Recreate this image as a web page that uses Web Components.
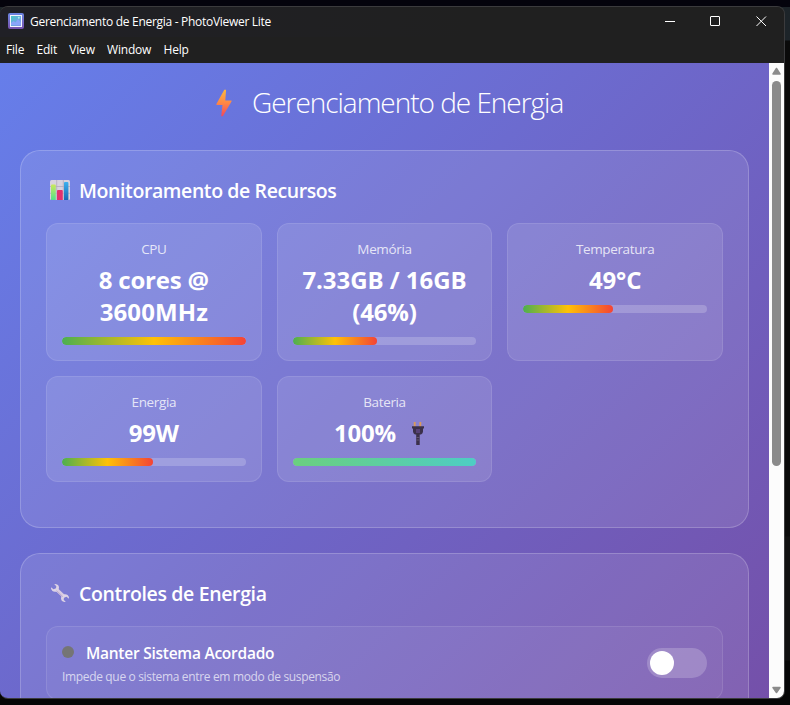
<!DOCTYPE html>
<html lang="pt-BR">
<head>
<meta charset="utf-8">
<title>Gerenciamento de Energia</title>
<style>
html,body{margin:0;height:705px;overflow:hidden;background:#070709}
body{font-family:"Open Sans","Noto Sans",sans-serif;color:#fff;background:linear-gradient(#04030c 0 7px,#1d2429 7px 40px,#0a0a0a 41px 536px,#101010 537px 660px,#060606 661px)}
</style>
</head>
<body>
<app-window>
  <window-titlebar slot="bar">Gerenciamento de Energia - PhotoViewer Lite</window-titlebar>
  <menu-bar slot="bar" items="File,Edit,View,Window,Help"></menu-bar>
  <page-title><energy-icon name="bolt" slot="icon"></energy-icon>Gerenciamento de Energia</page-title>
  <glass-section>
    <energy-icon name="chart" slot="icon"></energy-icon>
    <span slot="title">Monitoramento de Recursos</span>
    <resource-grid>
      <resource-card label="CPU" level="100">8 cores @<br><span style="letter-spacing:.1px">3600MHz</span></resource-card>
      <resource-card label="Memória" level="46"><span style="letter-spacing:-.05px">7.33GB / 16GB</span><br>(46%)</resource-card>
      <resource-card label="Temperatura" level="49">49°C</resource-card>
      <resource-card label="Energia" level="49.7">99W</resource-card>
      <resource-card label="Bateria" level="100" kind="battery">100% <energy-icon name="plug"></energy-icon></resource-card>
    </resource-grid>
  </glass-section>
  <glass-section style="--title-ls:-.36px">
    <energy-icon name="wrench" slot="icon"></energy-icon>
    <span slot="title">Controles de Energia</span>
    <toggle-row><span slot="name">Manter Sistema Acordado</span>Impede que o sistema entre em modo de suspensão</toggle-row>
  </glass-section>
</app-window>
<script>
const define=(name,html,init)=>customElements.define(name,class extends HTMLElement{
  connectedCallback(){
    if(this.shadowRoot)return;
    const root=this.attachShadow({mode:'open'});
    root.innerHTML=html;
    if(init)init(this,root);
  }
});

define('app-window',`<style>
:host{display:flex;flex-direction:column;box-sizing:border-box;width:785px;height:693px;position:relative;top:6px;border:1px solid #3b3b3d;border-left:0;border-radius:8px;overflow:hidden;background:#202020}
.body{flex:1;min-height:0;display:flex}
.view{flex:1;min-width:0;overflow:hidden;background:linear-gradient(135deg,#667eea 0%,#764ba2 100%) 0 0/100% 790px no-repeat}
.content{display:flex;flex-direction:column;gap:25px;padding:0 20px}
</style>
<slot name="bar"></slot>
<div class="body"><div class="view"><div class="content"><slot></slot></div></div><scroll-track></scroll-track></div>`);

define('window-titlebar',`<style>
:host{display:flex;align-items:center;height:30px;flex:none;background:linear-gradient(90deg,#202026,#202020 60%);font-size:12px;letter-spacing:-.29px;padding-left:8px}
.logo{width:16px;height:16px;margin-right:6px;position:relative;top:-1px}
.name{flex:1;line-height:16px}
.buttons{display:flex;width:137px}
.buttons svg{width:46px;height:29px;display:block;flex:none;position:relative;top:-1px}
</style>
<svg class="logo" viewBox="0 0 16 16"><defs><linearGradient id="f" x2="0" y2="1"><stop stop-color="#6c86e2"/><stop offset="1" stop-color="#7752ad"/></linearGradient><linearGradient id="p" x2="1" y2="1"><stop stop-color="#46cbc4"/><stop offset="1" stop-color="#8a8df4"/></linearGradient></defs><rect width="16" height="16" rx="2" fill="url(#f)"/><rect x="2.5" y="2.5" width="11" height="11" fill="url(#p)" stroke="#f4f4ff"/><path d="M3 12V10l2.5-2 2 1.5L10 6l3 3.5V12z" fill="#8aa5fa"/><circle cx="10.8" cy="4.8" r="1" fill="#a7eee9"/></svg>
<span class="name"><slot></slot></span>
<span class="buttons">
<svg viewBox="0 0 46 29"><path d="M18 14.5h10" stroke="#fff"/></svg>
<svg viewBox="0 0 46 29"><rect x="17.5" y="9.500" width="9" height="9" rx=".5" fill="none" stroke="#fff"/></svg>
<svg viewBox="0 0 46 29"><path d="M17.500 9.500l9.500 9.500M27 9.500l-9.500 9.500" stroke="#fff"/></svg>
</span>`);

define('menu-bar',`<style>
:host{display:flex;height:26px;flex:none;background:#202020;font-size:12px;letter-spacing:-.2px;padding-left:6px;gap:12.3px;line-height:25px}
</style>`,(el,root)=>{
  for(const t of el.getAttribute('items').split(',')){
    const s=document.createElement('span');s.textContent=t;root.append(s);
  }
});

define('scroll-track',`<style>
:host{display:flex;flex-direction:column;align-items:center;width:15px;background:#fcfcfc}
svg{width:15px;height:18px;flex:none;display:block}
.thumb{width:9px;height:385px;border-radius:5px;background:#8b8b8b}
.rest{flex:1}
</style>
<svg viewBox="0 0 15 18"><path d="M7.500 5.500L11 11H4z" fill="#8b8b8b" stroke="#8b8b8b" stroke-width="1.500" stroke-linejoin="round"/></svg>
<div class="thumb"></div><div class="rest"></div>
<svg viewBox="0 0 15 18"><path d="M7.500 12.500L11 7.500H4z" fill="#8b8b8b" stroke="#8b8b8b" stroke-width="1.500" stroke-linejoin="round"/></svg>`);

define('page-title',`<style>
:host{display:flex;height:62px;font-size:28px;font-weight:300;letter-spacing:-1.03px;padding-left:195px;line-height:79px;white-space:nowrap}
.gap{width:20px}
::slotted(energy-icon){margin-top:24px}
</style><slot name="icon"></slot><span class="gap"></span><span><slot></slot></span>`);

define('glass-section',`<style>
:host{display:block;flex:none;box-sizing:border-box;padding:25px;border:1px solid rgba(255,255,255,.2);border-radius:20px;background:rgba(255,255,255,.1)}
h2{display:flex;align-items:center;margin:0 0 19px;height:28px;font-size:19.500px;font-weight:650;letter-spacing:var(--title-ls,-.4px);line-height:28px;white-space:nowrap}
.icon{width:33px;height:28px;display:block}
.text{padding-top:2px}
</style><h2><span class="icon"><slot name="icon"></slot></span><span class="text"><slot name="title"></slot></span></h2><slot></slot>`);

define('resource-grid',`<style>
:host{display:grid;grid-template-columns:repeat(3,1fr);gap:15px;margin-bottom:20px}
</style><slot></slot>`);

define('resource-card',`<style>
:host{display:block;box-sizing:border-box;padding:15px;border:1px solid rgba(255,255,255,.1);border-radius:12px;background:rgba(255,255,255,.1);text-align:center}
.label{height:25px;line-height:20px;font-size:13.500px;letter-spacing:-.36px;color:rgba(255,255,255,.8)}
.value{font-size:24px;font-weight:700;line-height:32px;letter-spacing:-.2px;white-space:nowrap}
.bar{height:8px;margin-top:9px;border-radius:4px;background:rgba(255,255,255,.2);overflow:hidden}
.fill{height:100%;border-radius:4px;background:linear-gradient(90deg,#4caf50,#ffc107,#f44336)}
:host([kind=battery]) .fill{background:linear-gradient(90deg,#6bcf7f,#4ecdc4)}
</style><div class="label"></div><div class="value"><slot></slot></div><div class="bar"><div class="fill"></div></div>`,(el,root)=>{
  root.querySelector('.label').textContent=el.getAttribute('label');
  root.querySelector('.fill').style.width=el.getAttribute('level')+'%';
});

define('toggle-row',`<style>
:host{display:flex;align-items:center;justify-content:space-between;box-sizing:border-box;height:74px;padding:0 15px;border:1px solid rgba(255,255,255,.1);border-radius:12px;background:rgba(255,255,255,.05)}
.name{display:flex;align-items:center;height:24px;font-size:15.500px;font-weight:650;letter-spacing:-.25px;white-space:nowrap}
.text{padding-top:2px}
.dot{width:12px;height:12px;border-radius:50%;background:#757575;margin-right:12px}
.desc{font-size:12px;letter-spacing:-.34px;line-height:20px;padding-top:3px;margin-bottom:-1px;color:rgba(255,255,255,.7);white-space:nowrap}
.switch{box-sizing:border-box;width:60px;height:30px;padding:3px;border-radius:15px;background:rgba(255,255,255,.2)}
.knob{width:24px;height:24px;border-radius:50%;background:#fff}
</style><div><div class="name"><span class="dot"></span><span class="text"><slot name="name"></slot></span></div><div class="desc"><slot></slot></div></div><div class="switch"><div class="knob"></div></div>`);

const icons={
bolt:[16,28,`<defs><linearGradient id="g" x2="0" y2="1"><stop stop-color="#fdb83e"/><stop offset=".5" stop-color="#ff8745"/><stop offset="1" stop-color="#f1485c"/></linearGradient></defs><path d="M8.300 .7h1.800L9.300 11.500h5.800q.9.200.4 1L6.800 27.300H5.200L6.500 16H1Q0 15.800.4 15z" fill="url(#g)"/>`],
chart:[20,20,`<defs><linearGradient id="a" x2="0" y2="1"><stop stop-color="#cbe85b"/><stop offset="1" stop-color="#52df8c"/></linearGradient><linearGradient id="b" x2="0" y2="1"><stop stop-color="#3db0ee"/><stop offset="1" stop-color="#1a68b4"/></linearGradient></defs><rect width="20" height="20" rx="1.500" fill="#d8d2de"/><path d="M0 6.500h20M0 13.300h20M6.700 0v20M13.300 0v20" stroke="#b2aabd" stroke-width=".8"/><path d="M1 5.500q0-1 1-1h2.800q1 0 1 1V20H1z" fill="url(#a)"/><path d="M7 11q0-1 1-1h3.800q1 0 1 1v9H7z" fill="#e3306d"/><path d="M14 3q0-1 1-1h2.400q1 0 1 1v17H14z" fill="url(#b)"/>`],
wrench:[20,20,`<path d="M6 6L14.500 14" stroke="#d8cbe2" stroke-width="3.400"/><path d="M4.200 1.100Q7 .5 8.600 2.800Q9.400 4.500 8.600 6.400L6.600 8.500Q4.200 9.300 2.400 8Q.6 6.500 1 4.200L3.600 6.200L6 5.200L6.300 3.200z" fill="#ddd3e5"/><path d="M15.800 18.900Q13 19.500 11.400 17.200Q10.600 15.500 11.400 13.600L13.400 11.500Q15.800 10.700 17.600 12Q19.400 13.500 19 15.800L16.400 13.800L14 14.800L13.700 16.800z" fill="#ddd3e5"/><path d="M6.500 7.500l6.500 6.300" stroke="#b9a5cb" stroke-width=".8"/>`],
plug:[14,26,`<path d="M3.700 1v5M9.300 1v5" stroke="#d99a5b" stroke-width="1.900"/><path d="M1 5.200h12v2.200h-1v3.100q0 2-2 3H8.700V24H5.200V13.500H4q-2-1-2-3V7.400H1z" fill="#3b304a"/><path d="M5 9h4M5 11h4" stroke="#7957ad" stroke-width=".9"/><path d="M5.500 16.500h3M5.500 19h3" stroke="#6b607b" stroke-width=".8"/>`]
};
define('energy-icon',`<style>
:host{display:inline-block;flex:none}
svg{display:block}
:host([name=chart]) svg{margin:4px 0 0 4px}
:host([name=chart]),:host([name=wrench]){display:block;padding-top:.1px}
:host([name=wrench]) svg{margin:4px 0 0 4px}
:host([name=bolt]) svg{margin:2px 0 0 1px}
:host([name=plug]){height:24px;width:24px;margin:0 0 0 9px;vertical-align:-3px}
</style><svg></svg>`,(el,root)=>{
  const [w,h,body]=icons[el.getAttribute('name')];
  const svg=root.querySelector('svg');
  svg.setAttribute('viewBox',`0 0 ${w} ${h}`);
  svg.setAttribute('width',w);svg.setAttribute('height',h);
  svg.innerHTML=body;
});
</script>
</body>
</html>
